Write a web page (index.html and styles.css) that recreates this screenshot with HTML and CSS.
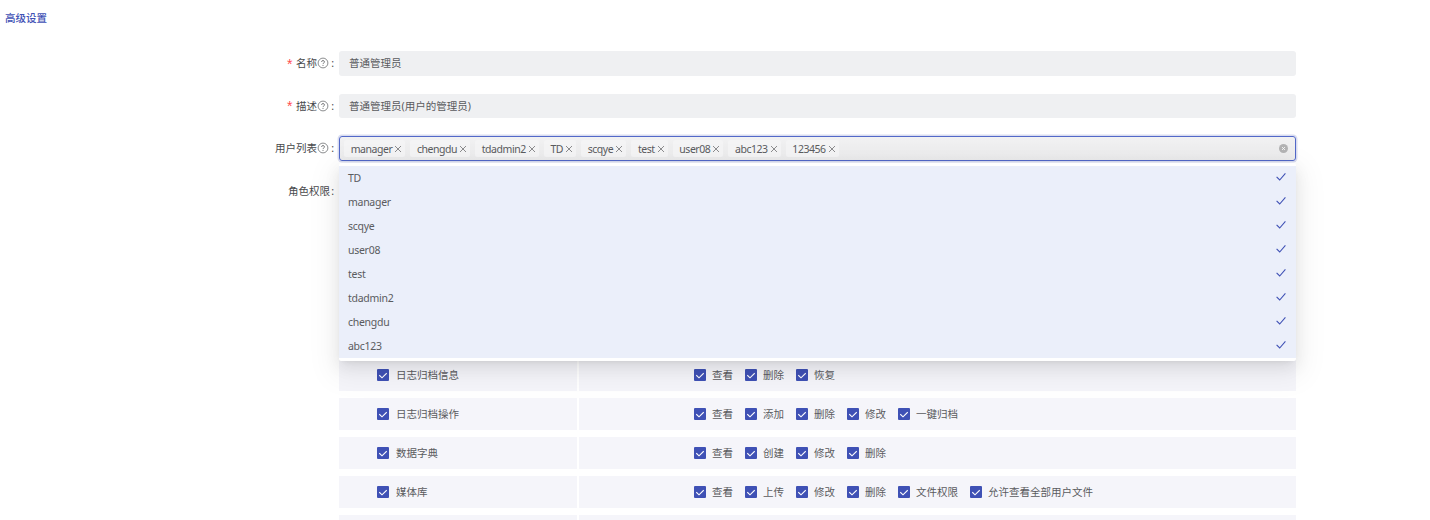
FILE: index.html
```html
<!DOCTYPE html>
<html lang="zh-CN">
<head>
  <meta charset="UTF-8" />
  <meta name="viewport" content="width=device-width, initial-scale=1.0"/>
  <title>高级设置</title>
  <link rel="stylesheet" href="styles.css">
</head>
<body>
  <svg class="symbols" width="0" height="0">
    <symbol id="help" viewBox="0 0 12 12">
      <circle cx="6" cy="6" r="4.9" fill="none" stroke="currentColor" stroke-width="0.8"/>
      <path d="M4.5 4.9C4.5 3.1 7.5 3.1 7.5 4.9C7.5 6 6 5.9 6 7.1" fill="none" stroke="currentColor" stroke-width="0.9"/>
      <circle cx="6" cy="8.5" r="0.55" fill="currentColor"/>
    </symbol>
    <symbol id="close" viewBox="0 0 8 8">
      <path d="M1 1L7 7M7 1L1 7" fill="none" stroke="currentColor" stroke-width="0.9"/>
    </symbol>
    <symbol id="tick" viewBox="0 0 10 10">
      <path d="M0.6 4.8L3.7 8L9.4 1.4" fill="none" stroke="currentColor" stroke-width="1.1"/>
    </symbol>
    <symbol id="box-tick" viewBox="0 0 8 8">
      <path d="M0.3 4.2L3 6.8L7.7 2.2" fill="none" stroke="currentColor" stroke-width="1.1"/>
    </symbol>
  </svg>

  <h1 class="title">高级设置</h1>

  <main class="form">
    <div class="form-row">
      <label class="label"><span class="required">*</span>名称<svg class="help"><use href="#help"/></svg><span class="colon">:</span></label>
      <div class="input">普通管理员</div>
    </div>
    <div class="form-row">
      <label class="label"><span class="required">*</span>描述<svg class="help"><use href="#help"/></svg><span class="colon">:</span></label>
      <div class="input">普通管理员(用户的管理员)</div>
    </div>
    <div class="form-row">
      <label class="label">用户列表<svg class="help"><use href="#help"/></svg><span class="colon">:</span></label>
      <div class="select">
        <div class="tags" id="tags"></div>
        <svg class="clear" viewBox="0 0 9 9">
          <circle cx="4.5" cy="4.5" r="4.5" fill="#b3b3b4"/>
          <path d="M3 3L6 6M6 3L3 6" stroke="#fff" stroke-width="0.8"/>
        </svg>
        <ul class="dropdown" id="dropdown"></ul>
      </div>
    </div>
    <div class="form-row">
      <label class="label">角色权限<span class="colon colon-tight">:</span></label>
      <div class="roles" id="roles"></div>
    </div>
  </main>

  <script>
    const selected = ["manager", "chengdu", "tdadmin2", "TD", "scqye", "test", "user08", "abc123", "123456"];
    const options = ["TD", "manager", "scqye", "user08", "test", "tdadmin2", "chengdu", "abc123"];
    const roles = [
      ["日志归档信息", ["查看", "删除", "恢复"]],
      ["日志归档操作", ["查看", "添加", "删除", "修改", "一键归档"]],
      ["数据字典", ["查看", "创建", "修改", "删除"]],
      ["媒体库", ["查看", "上传", "修改", "删除", "文件权限", "允许查看全部用户文件"]],
      ["", []]
    ];

    function checkbox(text) {
      return `<span class="check"><span class="box"><svg><use href="#box-tick"/></svg></span>${text}</span>`;
    }

    document.getElementById("tags").innerHTML = selected
      .map(name => `<span class="tag">${name}<svg><use href="#close"/></svg></span>`).join("");

    document.getElementById("dropdown").innerHTML = options
      .map(name => `<li class="option">${name}<svg><use href="#tick"/></svg></li>`).join("");

    document.getElementById("roles").innerHTML = roles
      .map(([name, actions]) => `
        <div class="role">
          <div class="cell cell-name">${name ? checkbox(name) : ""}</div>
          <div class="cell cell-actions">${actions.map(checkbox).join("")}</div>
        </div>`).join("");
  </script>
</body>
</html>
```

FILE: styles.css
```css
* {
  box-sizing: border-box;
}
body {
  margin: 0;
  height: 520px;
  overflow: hidden;
  background: #fff;
  color: #5a5b5e;
  font-family: "Noto Sans", "Noto Sans CJK SC", sans-serif;
  font-size: 10.5px;
  line-height: 16px;
}
.symbols {
  display: block;
}
.title {
  margin: 0;
  padding: 10px 0 0 5px;
  height: 51px;
  color: #3f51b5;
  font-size: 10.5px;
  font-weight: 500;
}
.form {
  height: 469px;
  overflow: hidden;
}
.form-row {
  display: flex;
  width: 1296px;
  height: 25px;
  margin-bottom: 17.5px;
}
.label {
  display: flex;
  align-items: center;
  justify-content: flex-end;
  width: 339px;
  height: 24px;
  padding-right: 5px;
  color: #48494c;
}
.required {
  margin-right: 3.5px;
  color: #ff4d4f;
  font-family: "Liberation Sans", sans-serif;
  font-size: 14px;
  line-height: 10px;
  padding-top: 1px;
}
.help {
  width: 12px;
  height: 12px;
  color: #6c6e71;
}
.colon {
  width: 5px;
  text-align: right;
}
.colon-tight {
  width: 4px;
}
.input {
  flex: 1;
  height: 24.5px;
  padding: 4px 10px;
  background: #eff0f2;
  border-radius: 3px;
}
.select {
  position: relative;
  flex: 1;
  display: flex;
  align-items: center;
  justify-content: space-between;
  height: 25px;
  padding: 0 7px 0 4px;
  border: 1px solid #5268c8;
  border-radius: 3px;
  background: linear-gradient(#f1f1f2, #ebebec);
  box-shadow: 0 0 0 1.5px rgba(63, 81, 181, 0.2);
}
.tags {
  display: flex;
  gap: 5px;
}
.tag {
  display: flex;
  align-items: center;
  height: 17px;
  padding: 0 3px 0 6.7px;
  background: #f4f4f5;
  border-radius: 2px;
  letter-spacing: -0.46px;
}
.tag svg {
  width: 8px;
  height: 8px;
  margin-left: 2px;
  color: #808082;
}
.clear {
  width: 9px;
  height: 9px;
}
.dropdown {
  position: absolute;
  z-index: 2;
  top: 26px;
  left: -1px;
  right: -1px;
  margin: 0;
  padding: 3px 0;
  list-style: none;
  background: #fff;
  border-radius: 2px;
  box-shadow: 0 3px 6px -4px rgba(0, 0, 0, 0.12), 0 6px 16px rgba(0, 0, 0, 0.08), 0 9px 28px 8px rgba(0, 0, 0, 0.05);
}
.option {
  display: flex;
  align-items: center;
  justify-content: space-between;
  height: 24px;
  padding: 0 10px 0 9px;
  background: #ebeffa;
  letter-spacing: -0.28px;
}
.option svg {
  width: 10px;
  height: 10px;
  margin-bottom: 2px;
  color: #3f51b5;
}
/* the upper part of the list sits under the open dropdown */
.roles {
  flex: 1;
  padding-top: 180.5px;
}
.role {
  display: flex;
  gap: 2px;
  height: 32px;
  margin-bottom: 7px;
}
.cell {
  display: flex;
  align-items: center;
  gap: 12px;
  background: #f5f5fa;
}
.cell-name {
  width: 238px;
  padding-left: 38px;
}
.cell-actions {
  flex: 1;
  padding-left: 115px;
}
.check {
  display: flex;
  align-items: center;
  gap: 6px;
}
.cell-name .check {
  gap: 7px;
}
.box {
  display: flex;
  align-items: center;
  justify-content: center;
  width: 12px;
  height: 12px;
  background: #3f51b5;
  border-radius: 1px;
  color: #fff;
}
.box svg {
  width: 8px;
  height: 8px;
}
```
